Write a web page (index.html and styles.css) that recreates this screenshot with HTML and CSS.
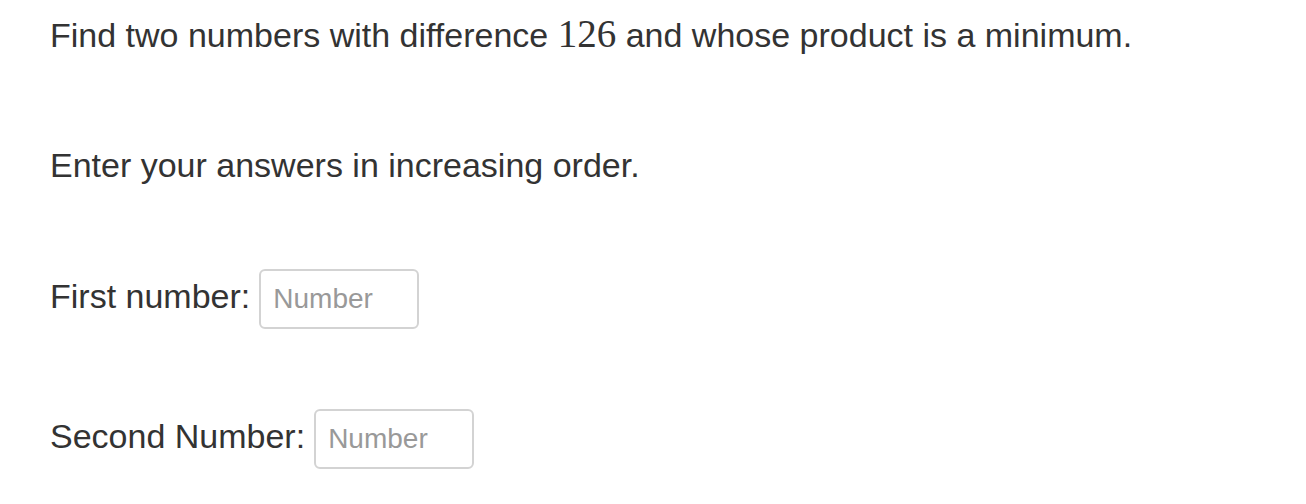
FILE: index.html
```html
<!DOCTYPE html>
<html>
<head>
<meta charset="utf-8">
<link rel="stylesheet" href="styles.css">
</head>
<body>
<div class="problem">
  <p class="line line-q">Find two numbers with difference <span class="math">126</span> and whose product is a minimum.</p>
  <p class="line line-order">Enter your answers in increasing order.</p>
  <div class="field field-first">
    <label class="label">First number:</label>
    <input class="num-input" type="text" placeholder="Number">
  </div>
  <div class="field field-second">
    <label class="label">Second Number:</label>
    <input class="num-input" type="text" placeholder="Number">
  </div>
</div>
</body>
</html>
```
FILE: styles.css
```css
html, body {
  margin: 0;
  padding: 0;
  background: #fff;
}
body {
  font-family: "Liberation Sans", Arial, sans-serif;
  color: #333;
  font-size: 34px;
}
.problem {
  display: flex;
  flex-direction: column;
  padding: 15px 0 0 50px;
}
.line {
  margin: 0;
  line-height: 40px;
}
.math {
  font-family: "Liberation Serif", "Times New Roman", serif;
  font-size: 39px;
  line-height: 0;
}
.line-order {
  margin-top: 90px;
}
.field {
  display: flex;
  align-items: baseline;
  gap: 9px;
}
.field-first {
  margin-top: 84px;
}
.field-second {
  margin-top: 80px;
}
.label {
  line-height: 40px;
}
.num-input {
  box-sizing: border-box;
  width: 160px;
  height: 60px;
  border: 2px solid #d3d3d3;
  border-radius: 6px;
  padding: 0 12px;
  margin: 0;
  font-family: "Liberation Sans", Arial, sans-serif;
  font-size: 28px;
  color: #555;
  outline: none;
}
.num-input::placeholder {
  color: #999;
}
```
